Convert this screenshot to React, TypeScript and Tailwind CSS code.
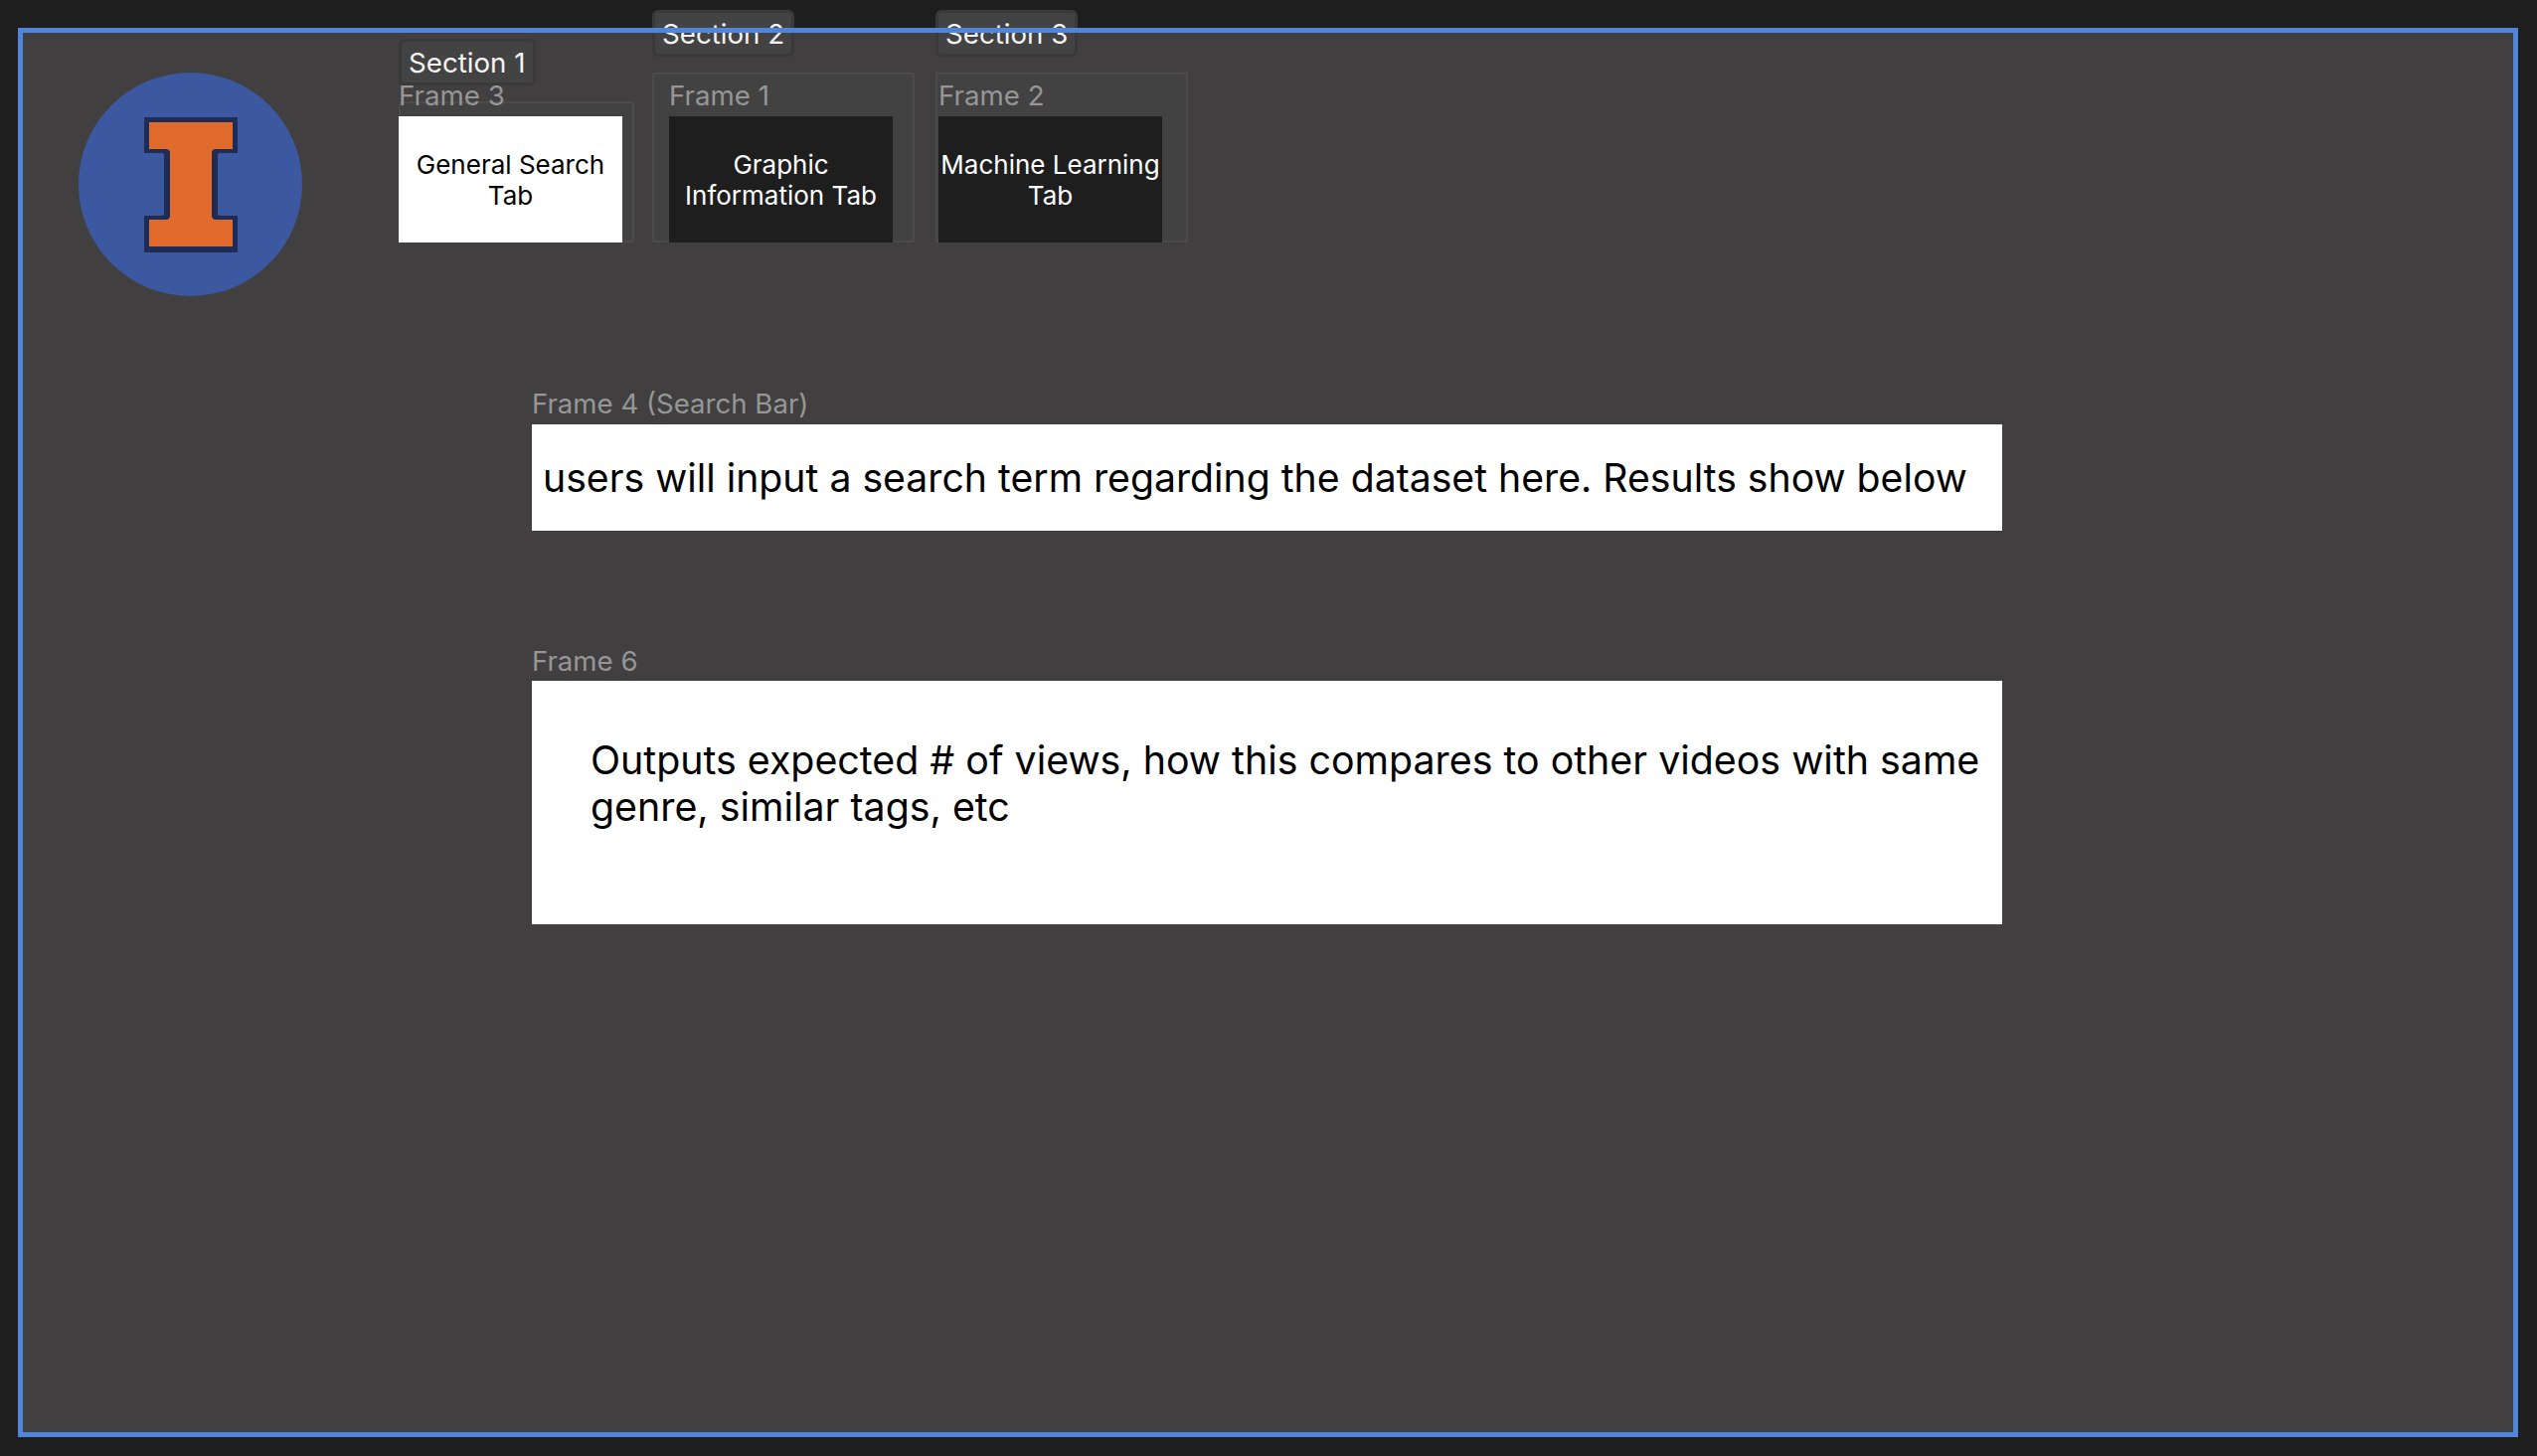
type TabSection = {
  section: string;
  frame: string;
  lines: string[];
  active?: boolean;
  col: string;
  inset: string;
  boxH: string;
};

const tabs: TabSection[] = [
  {
    section: "Section 1",
    frame: "Frame 3",
    lines: ["General Search", "Tab"],
    active: true,
    col: "w-[237px]",
    inset: "pl-0",
    boxH: "h-[142px]",
  },
  {
    section: "Section 2",
    frame: "Frame 1",
    lines: ["Graphic", "Information Tab"],
    col: "w-[264px] mr-[3px]",
    inset: "pl-[17px]",
    boxH: "h-[171px]",
  },
  {
    section: "Section 3",
    frame: "Frame 2",
    lines: ["Machine Learning", "Tab"],
    col: "w-[254px]",
    inset: "pl-[3px]",
    boxH: "h-[171px]",
  },
];

function Logo() {
  return (
    <div className="self-start ml-[61px] mt-[45px] w-[225px] h-[225px] shrink-0 rounded-full bg-[#3c58a1] flex items-center justify-center">
      <svg width="94" height="136" viewBox="0 0 94 136">
        <path
          d="M0 0H94V36H76Q74 36 74 38V97Q74 99 76 99H94V136H0V99H18Q20 99 20 97V38Q20 36 18 36H0Z"
          fill="#1f2c55"
        />
        <path
          d="M5 5H89V32H72Q68 32 68 36V99Q68 103 72 103H89V130H5V103H22Q26 103 26 99V36Q26 32 22 32H5Z"
          fill="#e16b2d"
        />
      </svg>
    </div>
  );
}

function TabColumn({ t }: { t: TabSection }) {
  return (
    <div className={`${t.col} shrink-0 flex flex-col items-start`}>
      {/* section chip */}
      <div className="h-[47px] px-[7px] pt-[3px] mb-[16px] flex items-center rounded-[6px] border-[3px] border-[#3a3a3a] bg-[#434343] text-[27.7px] text-[#f5f5f5]">
        {t.section}
      </div>
      <div
        className={`${t.boxH} ${t.inset} w-full flex flex-col justify-end rounded-[2px] bg-[#424242] shadow-[inset_0_0_0_2px_#4b4b4b]`}
      >
        <div className="shrink-0 h-[26px] mb-[8px] leading-[26px] text-[27.7px] text-[#969696]">{t.frame}</div>
        <div
          className={`shrink-0 w-[225px] h-[127px] flex flex-col items-center justify-center text-[26px] leading-[31px] ${
            t.active ? "bg-white text-black" : "bg-[#1e1e1e] text-white"
          }`}
        >
          {t.lines.map((l) => (
            <span key={l} className="whitespace-nowrap">
              {l}
            </span>
          ))}
        </div>
      </div>
    </div>
  );
}

export default function App() {
  return (
    <div className="h-[1465px] overflow-hidden bg-[#1e1e1e] pl-[18px] pt-[28px] font-['Inter',sans-serif]">
      <div className="relative w-[2515px] h-[1418px] bg-[#413f40]">
        {/* top row: logo + tabs */}
        <div className="h-[216px] flex items-end">
          <Logo />
          <div className="ml-[97px] flex items-end gap-[18px]">
            {tabs.map((t) => (
              <TabColumn key={t.section} t={t} />
            ))}
          </div>
        </div>

        {/* search + output */}
        <div className="ml-[517px] mt-[149px] w-[1479px]">
          <div className="h-[26px] mb-[8px] leading-[26px] text-[27.6px] text-[#969696]">Frame 4 (Search Bar)</div>
          <div className="h-[107px] pl-[11px] pt-[2px] flex items-center bg-white text-[39.2px] text-black whitespace-nowrap">
            users will input a search term regarding the dataset here. Results show below
          </div>

          <div className="mt-[118px] h-[26px] mb-[7px] leading-[26px] text-[27.6px] text-[#969696]">Frame 6</div>
          <div className="h-[245px] pl-[59px] pr-[16px] pt-[56px] bg-white text-[39.35px] leading-[47px] text-black">
            Outputs expected # of views, how this compares to other videos with same genre, similar tags, etc
          </div>
        </div>

        {/* selection outline sits over everything */}
        <div className="absolute inset-0 border-[5px] border-[#4f86da] pointer-events-none" />
      </div>
    </div>
  );
}
